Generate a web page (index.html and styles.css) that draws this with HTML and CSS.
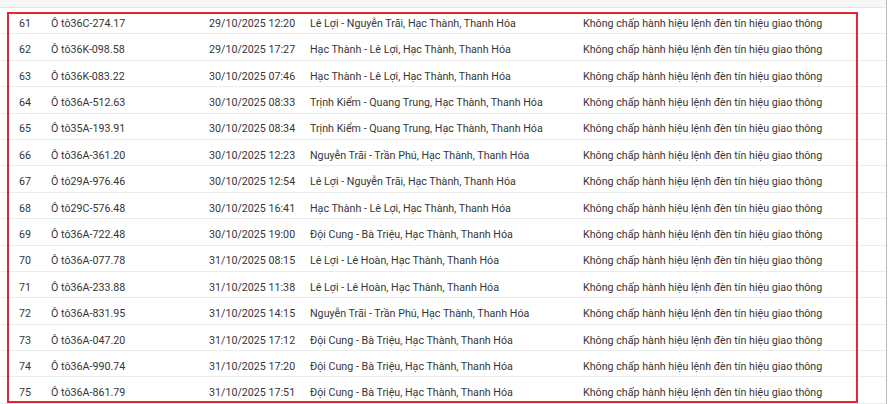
FILE: index.html
```html
<!DOCTYPE html>
<html lang="vi">
<head>
<meta charset="utf-8">
<link rel="stylesheet" href="styles.css">
</head>
<body>
<div class="wrap">
  <div class="head"></div>
  <div class="rows">
    <div class="row"><span>61</span><span>Ô tô36C-274.17</span><span>29/10/2025 12:20</span><span>Lê Lợi - Nguyễn Trãi, Hạc Thành, Thanh Hóa</span><span>Không chấp hành hiệu lệnh đèn tín hiệu giao thông</span></div>
    <div class="row"><span>62</span><span>Ô tô36K-098.58</span><span>29/10/2025 17:27</span><span>Hạc Thành - Lê Lợi, Hạc Thành, Thanh Hóa</span><span>Không chấp hành hiệu lệnh đèn tín hiệu giao thông</span></div>
    <div class="row"><span>63</span><span>Ô tô36K-083.22</span><span>30/10/2025 07:46</span><span>Hạc Thành - Lê Lợi, Hạc Thành, Thanh Hóa</span><span>Không chấp hành hiệu lệnh đèn tín hiệu giao thông</span></div>
    <div class="row"><span>64</span><span>Ô tô36A-512.63</span><span>30/10/2025 08:33</span><span>Trịnh Kiểm - Quang Trung, Hạc Thành, Thanh Hóa</span><span>Không chấp hành hiệu lệnh đèn tín hiệu giao thông</span></div>
    <div class="row"><span>65</span><span>Ô tô35A-193.91</span><span>30/10/2025 08:34</span><span>Trịnh Kiểm - Quang Trung, Hạc Thành, Thanh Hóa</span><span>Không chấp hành hiệu lệnh đèn tín hiệu giao thông</span></div>
    <div class="row"><span>66</span><span>Ô tô36A-361.20</span><span>30/10/2025 12:23</span><span>Nguyễn Trãi - Trần Phú, Hạc Thành, Thanh Hóa</span><span>Không chấp hành hiệu lệnh đèn tín hiệu giao thông</span></div>
    <div class="row"><span>67</span><span>Ô tô29A-976.46</span><span>30/10/2025 12:54</span><span>Lê Lợi - Nguyễn Trãi, Hạc Thành, Thanh Hóa</span><span>Không chấp hành hiệu lệnh đèn tín hiệu giao thông</span></div>
    <div class="row"><span>68</span><span>Ô tô29C-576.48</span><span>30/10/2025 16:41</span><span>Hạc Thành - Lê Lợi, Hạc Thành, Thanh Hóa</span><span>Không chấp hành hiệu lệnh đèn tín hiệu giao thông</span></div>
    <div class="row"><span>69</span><span>Ô tô36A-722.48</span><span>30/10/2025 19:00</span><span>Đội Cung - Bà Triệu, Hạc Thành, Thanh Hóa</span><span>Không chấp hành hiệu lệnh đèn tín hiệu giao thông</span></div>
    <div class="row"><span>70</span><span>Ô tô36A-077.78</span><span>31/10/2025 08:15</span><span>Lê Lợi - Lê Hoàn, Hạc Thành, Thanh Hóa</span><span>Không chấp hành hiệu lệnh đèn tín hiệu giao thông</span></div>
    <div class="row"><span>71</span><span>Ô tô36A-233.88</span><span>31/10/2025 11:38</span><span>Lê Lợi - Lê Hoàn, Hạc Thành, Thanh Hóa</span><span>Không chấp hành hiệu lệnh đèn tín hiệu giao thông</span></div>
    <div class="row"><span>72</span><span>Ô tô36A-831.95</span><span>31/10/2025 14:15</span><span>Nguyễn Trãi - Trần Phú, Hạc Thành, Thanh Hóa</span><span>Không chấp hành hiệu lệnh đèn tín hiệu giao thông</span></div>
    <div class="row"><span>73</span><span>Ô tô36A-047.20</span><span>31/10/2025 17:12</span><span>Đội Cung - Bà Triệu, Hạc Thành, Thanh Hóa</span><span>Không chấp hành hiệu lệnh đèn tín hiệu giao thông</span></div>
    <div class="row"><span>74</span><span>Ô tô36A-990.74</span><span>31/10/2025 17:20</span><span>Đội Cung - Bà Triệu, Hạc Thành, Thanh Hóa</span><span>Không chấp hành hiệu lệnh đèn tín hiệu giao thông</span></div>
    <div class="row"><span>75</span><span>Ô tô36A-861.79</span><span>31/10/2025 17:51</span><span>Đội Cung - Bà Triệu, Hạc Thành, Thanh Hóa</span><span>Không chấp hành hiệu lệnh đèn tín hiệu giao thông</span></div>
  </div>
  <div class="highlight"></div>
</div>
</body>
</html>
```
FILE: styles.css
```css
html, body {
  margin: 0;
  padding: 0;
  background: #fff;
}
.wrap {
  position: relative;
  width: 886px;
  height: 404px;
  border-right: 1px solid #bdbdbd;
  overflow: hidden;
  font-family: Roboto, "Noto Sans", sans-serif;
  font-size: 10.7px;
  color: #363636;
}
.head {
  height: 7px;
  background: #f7f7f7;
  border-bottom: 1px solid #e6e6e6;
}
.row {
  display: grid;
  grid-template-columns: 32px 158px 101px 273px 1fr;
  align-items: center;
  box-sizing: content-box;
  height: 20px;
  padding-top: 5.4px;
  padding-left: 19px;
  border-bottom: 1px solid #ececec;
  white-space: nowrap;
}
.highlight {
  position: absolute;
  left: 7px;
  top: 12px;
  width: 847px;
  height: 387px;
  border: 2px solid #e3262f;
}
```
